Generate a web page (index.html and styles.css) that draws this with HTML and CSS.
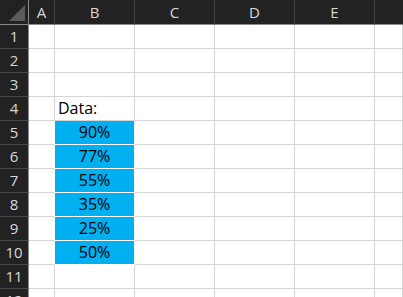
FILE: index.html
```html
<!DOCTYPE html>
<html>
<head>
    <meta charset="UTF-8">
    <title>Sheet</title>
    <link rel="stylesheet" href="styles.css">
</head>
<body>
    <div class="sheet">
        <div class="row head">
            <div class="corner">
                <svg width="28" height="24" viewBox="0 0 28 24"><polygon points="9,21 25,21 25,5" fill="#5b5b5b"/></svg>
            </div>
            <div class="col">A</div>
            <div class="col">B</div>
            <div class="col">C</div>
            <div class="col">D</div>
            <div class="col">E</div>
            <div class="col last"></div>
        </div>
        <div class="row"><div class="num">1</div><div class="cell"></div><div class="cell"></div><div class="cell"></div><div class="cell"></div><div class="cell"></div><div class="cell"></div></div>
        <div class="row"><div class="num">2</div><div class="cell"></div><div class="cell"></div><div class="cell"></div><div class="cell"></div><div class="cell"></div><div class="cell"></div></div>
        <div class="row"><div class="num">3</div><div class="cell"></div><div class="cell"></div><div class="cell"></div><div class="cell"></div><div class="cell"></div><div class="cell"></div></div>
        <div class="row"><div class="num">4</div><div class="cell"></div><div class="cell label">Data:</div><div class="cell"></div><div class="cell"></div><div class="cell"></div><div class="cell"></div></div>
        <div class="row"><div class="num">5</div><div class="cell before"></div><div class="cell fill">90%</div><div class="cell"></div><div class="cell"></div><div class="cell"></div><div class="cell"></div></div>
        <div class="row"><div class="num">6</div><div class="cell before"></div><div class="cell fill">77%</div><div class="cell"></div><div class="cell"></div><div class="cell"></div><div class="cell"></div></div>
        <div class="row"><div class="num">7</div><div class="cell before"></div><div class="cell fill">55%</div><div class="cell"></div><div class="cell"></div><div class="cell"></div><div class="cell"></div></div>
        <div class="row"><div class="num">8</div><div class="cell before"></div><div class="cell fill">35%</div><div class="cell"></div><div class="cell"></div><div class="cell"></div><div class="cell"></div></div>
        <div class="row"><div class="num">9</div><div class="cell before"></div><div class="cell fill">25%</div><div class="cell"></div><div class="cell"></div><div class="cell"></div><div class="cell"></div></div>
        <div class="row"><div class="num">10</div><div class="cell before"></div><div class="cell fill">50%</div><div class="cell"></div><div class="cell"></div><div class="cell"></div><div class="cell"></div></div>
        <div class="row"><div class="num">11</div><div class="cell"></div><div class="cell"></div><div class="cell"></div><div class="cell"></div><div class="cell"></div><div class="cell"></div></div>
        <div class="row"><div class="num">12</div><div class="cell"></div><div class="cell"></div><div class="cell"></div><div class="cell"></div><div class="cell"></div><div class="cell"></div></div>
    </div>
</body>
</html>
```

FILE: styles.css
```css
body {
    margin: 0;
    background-color: #ffffff;
    overflow: hidden;
    font-family: "Open Sans", "Noto Sans", sans-serif;
}
.sheet {
    width: 403px;
}
.row {
    display: grid;
    grid-template-columns: 29px 26px 80px 80px 80px 80px 1fr;
    grid-template-rows: 24px;
    height: 24px;
}
.row.head {
    grid-template-rows: 25px;
    height: 25px;
}
.row > div {
    box-sizing: border-box;
    overflow: hidden;
}
.corner {
    background-color: #222222;
    border-right: 1px solid #8a8a8a;
    border-bottom: 1px solid #8a8a8a;
}
.corner svg {
    display: block;
}
.col {
    background-color: #222222;
    color: #d8d8d8;
    font-size: 15px;
    line-height: 24px;
    text-align: center;
    border-right: 1px solid #444444;
    border-bottom: 1px solid #8a8a8a;
}
.col.last {
    border-right: none;
}
.num {
    background-color: #222222;
    color: #d8d8d8;
    font-size: 15px;
    line-height: 23px;
    text-align: center;
    border-right: 1px solid #8a8a8a;
    border-bottom: 1px solid #4a4a4a;
}
.cell {
    border-right: 1px solid #d4d4d4;
    border-bottom: 1px solid #d4d4d4;
    font-size: 16px;
    line-height: 23px;
    color: #000000;
}
.cell.label {
    padding-left: 3px;
}
.cell.before {
    border-right-color: #ffffff;
}
.cell.fill {
    background-color: #00b0f0;
    text-align: center;
    border-right-color: #ffffff;
    border-bottom-color: #ffffff;
}
```
